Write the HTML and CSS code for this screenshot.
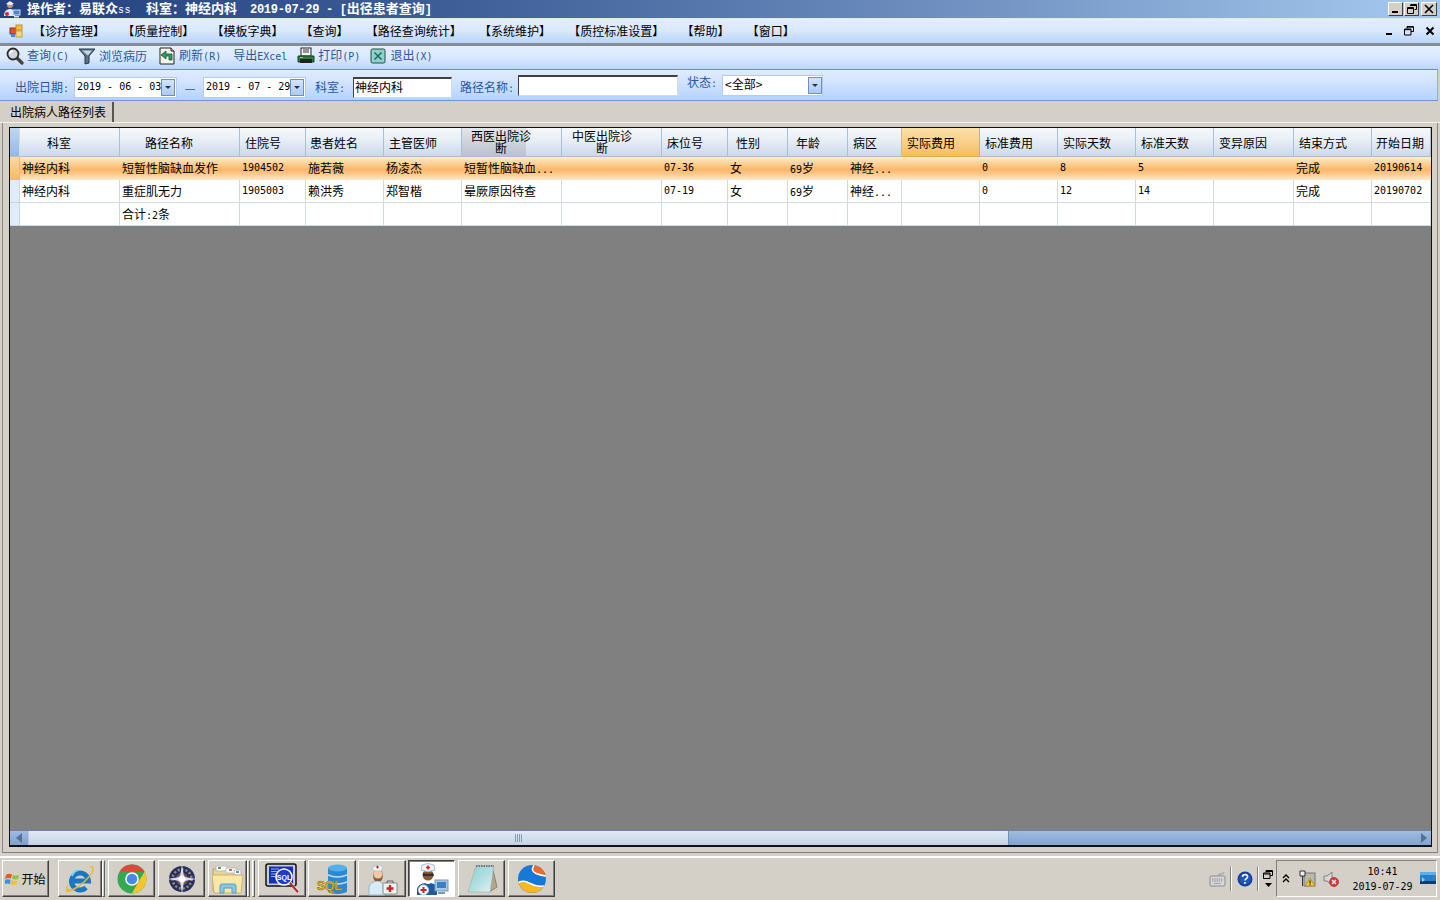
FILE: index.html
```html
<!DOCTYPE html>
<html lang="zh-CN">
<head>
<meta charset="utf-8">
<title>出径患者查询</title>
<link rel="stylesheet" href="styles.css">
</head>
<body>
<div class="app">
  <header class="titlebar">
    <svg class="title-icon" width="18" height="18" viewBox="0 0 18 18"><circle cx="7" cy="5" r="3" fill="#c99a72"/><path d="M3 4l4-3 4 3-4 1z" fill="#eef"/><path d="M1 16c0-5 3-7 6-7s5 2 5 7z" fill="#dfe8f4"/><circle cx="4" cy="14" r="2" fill="#d22"/><rect x="10" y="10" width="7" height="5" fill="#4a86c8" stroke="#dde" stroke-width="1"/><rect x="11" y="16" width="5" height="1.5" fill="#dde"/></svg>
    <span class="title-text">操作者：易联众<span class="t-lat t-small">ss</span><span class="t-gap1"></span>科室：神经内科<span class="t-gap2"></span><span class="t-lat">2019-07-29 - [</span>出径患者查询<span class="t-lat">]</span></span>
    <div class="winbtns">
      <button class="winbtn"><svg width="10" height="10" viewBox="0 0 10 10"><rect x="1" y="7" width="6" height="2" fill="#000"/></svg></button>
      <button class="winbtn"><svg width="10" height="10" viewBox="0 0 10 10"><path d="M3.5 .5h6v5h-2M.5 3.5h6v6h-6z M3 1.5h6.5M0 4.5h6.5" fill="none" stroke="#000"/></svg></button>
      <button class="winbtn winbtn-x"><svg width="10" height="10" viewBox="0 0 10 10"><path d="M1 1l8 8M9 1l-8 8" stroke="#000" stroke-width="1.6"/></svg></button>
    </div>
  </header>

  <nav class="menubar">
    <svg class="menu-icon" width="14" height="14" viewBox="0 0 14 14"><rect x="1" y="4" width="6" height="6" fill="#e05030" stroke="#a03010"/><rect x="7" y="1" width="6" height="5" fill="#f4c040" stroke="#c89020"/><rect x="7" y="7" width="6" height="6" fill="#f4d880" stroke="#c0a040"/><rect x="2" y="10" width="4" height="3" fill="#5080d0"/></svg>
    <ul class="menu-list">
      <li>【诊疗管理】</li><li>【质量控制】</li><li>【模板字典】</li><li>【查询】</li><li>【路径查询统计】</li><li>【系统维护】</li><li>【质控标准设置】</li><li>【帮助】</li><li>【窗口】</li>
    </ul>
    <div class="mdi-btns">
      <svg width="8" height="8" viewBox="0 0 8 8"><rect x="1" y="5" width="6" height="2" fill="#000"/></svg>
      <svg width="10" height="10" viewBox="0 0 10 10"><path d="M3 2.5V.5h6.500v5H7M.5 3h6.500v6H.5z M3 1.2h6.500M.5 3.700h6.500" fill="none" stroke="#000"/></svg>
      <svg width="10" height="10" viewBox="0 0 10 10"><path d="M1.5 1.5l7 7M8.500 1.500l-7 7" stroke="#000" stroke-width="2"/></svg>
    </div>
  </nav>

  <div class="toolbar">
    <div class="tool tool-1"><svg width="18" height="18" viewBox="0 0 18 18"><path d="M11 11l5 5" stroke="#4a3f36" stroke-width="3.200" stroke-linecap="round"/><circle cx="7" cy="7" r="5.500" fill="#cfd6dd" stroke="#2c2c2c" stroke-width="1.800"/><path d="M4 7a3 3 0 0 1 3-3" stroke="#fff" stroke-width="1.400" fill="none"/></svg><span>查询<span class="lat">(C)</span></span></div>
    <div class="tool tool-2"><svg width="18" height="18" viewBox="0 0 18 18"><path d="M1 2h16l-6 7v7l-4 1V9z" fill="#5d7488" stroke="#22364a"/><path d="M4 3.500h10l-4 5z" fill="#c6d6e4"/></svg><span>浏览病历</span></div>
    <div class="tool tool-3"><svg width="18" height="18" viewBox="0 0 18 18"><path d="M2 1h11l3 3v13H2z" fill="#f4f4e8" stroke="#222"/><path d="M13 1v3h3" fill="#ccc" stroke="#222"/><path d="M14 13V7H8V4L3 8l5 4V9h3v4z" fill="#2e9a64" stroke="#14553a" stroke-width=".8"/></svg><span>刷新<span class="lat">(R)</span></span></div>
    <div class="tool tool-4"><span>导出<span class="lat">EXcel</span></span></div>
    <div class="tool tool-5"><svg width="18" height="18" viewBox="0 0 18 18"><rect x="4" y="1" width="10" height="8" fill="#f4f4f4" stroke="#222"/><path d="M6 3h6M6 5h6" stroke="#333"/><path d="M1 9h16v6H1z" fill="#2e7d3a" stroke="#143" /><rect x="3" y="12" width="12" height="4" fill="#222"/><rect x="3" y="10" width="3" height="1" fill="#9c6"/></svg><span>打印<span class="lat">(P)</span></span></div>
    <div class="tool tool-6"><svg width="16" height="16" viewBox="0 0 16 16"><rect x="1" y="1" width="14" height="14" rx="1.500" fill="#8fd3c8" stroke="#204a50"/><path d="M4.500 4.500l7 7M11.500 4.500l-7 7" stroke="#1f6a70" stroke-width="1.600"/></svg><span>退出<span class="lat">(X)</span></span></div>
  </div>

  <form class="filters">
    <label class="f-label f-date-label">出院日期<span class="lat">:</span></label>
    <div class="datebox"><span class="lat">2019 - 06 - 03</span><span class="ddbtn"><i></i></span></div>
    <span class="dash">—</span>
    <div class="datebox"><span class="lat">2019 - 07 - 29</span><span class="ddbtn"><i></i></span></div>
    <label class="f-label f-dept-label">科室<span class="lat">:</span></label>
    <div class="input input-dept">神经内科</div>
    <label class="f-label f-path-label">路径名称<span class="lat">:</span></label>
    <div class="input input-path"></div>
    <label class="f-label f-state-label">状态<span class="lat">:</span></label>
    <div class="combo"><span>&lt;全部&gt;</span><span class="ddbtn"><i></i></span></div>
  </form>

  <div class="tabstrip"><div class="tab">出院病人路径列表</div></div>

  <main class="panel">
    <div class="grid">
      <div class="row head">
        <div class="corner"></div>
        <div class="hc">科室</div><div class="hc">路径名称</div><div class="hc">住院号</div><div class="hc">患者姓名</div><div class="hc">主管医师</div>
        <div class="hc wrap progress"><span>西医出院诊断</span></div><div class="hc wrap"><span>中医出院诊断</span></div>
        <div class="hc">床位号</div><div class="hc">性别</div><div class="hc">年龄</div><div class="hc">病区</div><div class="hc hot">实际费用</div>
        <div class="hc">标准费用</div><div class="hc">实际天数</div><div class="hc">标准天数</div><div class="hc">变异原因</div><div class="hc">结束方式</div><div class="hc">开始日期</div>
      </div>
      <div class="row data selected">
        <div class="rh"></div>
        <div class="c">神经内科</div><div class="c">短暂性脑缺血发作</div><div class="c lat">1904502</div><div class="c">施若薇</div><div class="c">杨凌杰</div><div class="c">短暂性脑缺血<span class="lat dots">...</span></div><div class="c"></div><div class="c lat">07-36</div><div class="c">女</div><div class="c"><span class="lat">69</span>岁</div><div class="c">神经<span class="lat dots">...</span></div><div class="c"></div><div class="c lat">0</div><div class="c lat">8</div><div class="c lat">5</div><div class="c"></div><div class="c">完成</div><div class="c lat">20190614</div>
      </div>
      <div class="row data">
        <div class="rh"></div>
        <div class="c">神经内科</div><div class="c">重症肌无力</div><div class="c lat">1905003</div><div class="c">赖洪秀</div><div class="c">郑智楷</div><div class="c">晕厥原因待查</div><div class="c"></div><div class="c lat">07-19</div><div class="c">女</div><div class="c"><span class="lat">69</span>岁</div><div class="c">神经<span class="lat dots">...</span></div><div class="c"></div><div class="c lat">0</div><div class="c lat">12</div><div class="c lat">14</div><div class="c"></div><div class="c">完成</div><div class="c lat">20190702</div>
      </div>
      <div class="row data">
        <div class="rh"></div>
        <div class="c"></div><div class="c">合计<span class="lat">:2</span>条</div><div class="c"></div><div class="c"></div><div class="c"></div><div class="c"></div><div class="c"></div><div class="c"></div><div class="c"></div><div class="c"></div><div class="c"></div><div class="c"></div><div class="c"></div><div class="c"></div><div class="c"></div><div class="c"></div><div class="c"></div><div class="c"></div>
      </div>
      <div class="grid-empty"></div>
      <div class="hscroll">
        <span class="sb-btn"><svg width="6" height="10" viewBox="0 0 6 10"><path d="M6 0v10L0 5z" fill="#56708f"/></svg></span>
        <span class="sb-thumb"><i></i></span>
        <span class="sb-track"></span>
        <span class="sb-end"><svg width="6" height="10" viewBox="0 0 6 10"><path d="M0 0v10l6-5z" fill="#56708f"/></svg></span>
      </div>
    </div>
  </main>

  <footer class="taskbar">
    <button class="tb tb-start"><svg width="16" height="14" viewBox="0 0 16 14"><path d="M1 3q3-2 6-.5L6 6.500q-3-1-6 .5z" fill="#e8562a"/><path d="M8 3q3 1.500 6 0l-1 4q-3 1-6-.5z" fill="#8cc43c"/><path d="M0 8q3-1.500 5.500 0L5 12q-3-1-6 .5z" fill="#3a90dc"/><path d="M6.500 8q3 1.500 6 .5l-1 4q-3 1-6-.5z" fill="#f4c030"/></svg><span>开始</span></button>

    <button class="tb tb-ie"><svg width="32" height="32" viewBox="0 0 32 32"><path d="M7.500 18h17a8.500 8.500 0 1 0-2.500 6.500" stroke="#1878c4" stroke-width="5" fill="none"/><path d="M8 13a9 9 0 0 1 6-6" stroke="#7fd4f6" stroke-width="2" fill="none"/><path d="M24 4C29 2 31 4 29 9 25 17 13 27 5 29 1 30 1 26 4 20 3 26 4 27 8 26 16 23 26 13 28 8 29 5 27 4 24 4z" fill="#e8b838"/></svg></button>
    <i class="grip"></i>
    <button class="tb tb-chrome"><svg width="30" height="30" viewBox="0 0 30 30"><circle cx="15" cy="15" r="14.500" fill="#34a853"/><path d="M15 .5a14.500 14.500 0 0 1 12.550 7.250L15 8.500 3.100 6.700A14.500 14.500 0 0 1 15 .5z" fill="#d94a3a"/><path d="M27.550 7.750A14.500 14.500 0 0 1 15 29.500l6-11z" fill="#f6c52c"/><circle cx="15" cy="15" r="6.800" fill="#fff"/><circle cx="15" cy="15" r="5.300" fill="#4a86e8"/></svg></button>
    <button class="tb tb-compass"><svg width="32" height="32" viewBox="0 0 32 32"><circle cx="16" cy="16" r="13" fill="#26305e"/><circle cx="16" cy="16" r="9.500" fill="none" stroke="#a08878" stroke-width="2.500" stroke-dasharray="2 2"/><circle cx="16" cy="16" r="6" fill="#7a5a60"/><path d="M16 1l2 13 13 2-13 2-2 13-2-13-13-2 13-2z" fill="#d8dce8"/><circle cx="16" cy="16" r="3.500" fill="#fff"/></svg></button>
    <button class="tb tb-folder"><svg width="32" height="30" viewBox="0 0 32 30"><path d="M1 5h10l2 2h16v20H1z" fill="#e8d590" stroke="#b8a060"/><rect x="4" y="2" width="11" height="5" fill="#fff" stroke="#bbb"/><rect x="6" y="3" width="3" height="2" fill="#5aa050"/><rect x="14" y="4" width="11" height="5" fill="#fff" stroke="#bbb"/><rect x="17" y="5" width="3" height="2" fill="#d06a40"/><rect x="22" y="6" width="7" height="5" fill="#fff" stroke="#bbb"/><rect x="24" y="7" width="3" height="2" fill="#50a0a0"/><path d="M0 11h31l-2 18H2z" fill="#f8e8a8" stroke="#c8b070"/><path d="M8 29v-7q0-2 2-2h12q2 0 2 2v7h-4v-5h-8v5z" fill="#8cc4e4" stroke="#5a9cc4"/></svg></button>
    <i class="grip"></i><i class="grip grip-2"></i>
    <button class="tb tb-sqlmon"><svg width="34" height="34" viewBox="0 0 34 34"><rect x="1" y="2" width="30" height="22" rx="2" fill="#c8ccd0" stroke="#111" stroke-width="1.500"/><rect x="4" y="4.500" width="24" height="17" fill="#1430b8"/><path d="M6 7h8M6 9.500h6M6 12h5M6 14.500h5" stroke="#8cb0f0"/><circle cx="19" cy="15" r="8" fill="#1a3cc8" stroke="#fff" stroke-width="1.500"/><text x="19" y="18" class="svgtxt-w" text-anchor="middle">SQL</text><path d="M25 21l8 9" stroke="#c02030" stroke-width="2.200"/><path d="M26 20l8 9" stroke="#eee" stroke-width=".8"/></svg></button>
    <button class="tb tb-sqldb"><svg width="34" height="32" viewBox="0 0 34 32"><rect x="13" y="5" width="19" height="23" fill="#2e88d0"/><ellipse cx="22.500" cy="28" rx="9.500" ry="3" fill="#2e88d0"/><ellipse cx="22.500" cy="5" rx="9.500" ry="3.500" fill="#52b0ec"/><path d="M13 12q9.500 4 19 0M13 19q9.500 4 19 0" stroke="#bfe0f8" fill="none" stroke-width="1.500"/><text x="2" y="27" class="svgtxt-sql">SQL</text></svg></button>
    <button class="tb tb-nurse"><svg width="34" height="34" viewBox="0 0 34 34"><path d="M4 33V25q1-5 8-6 7 1 8 6v8z" fill="#d8ecf6" stroke="#98b8d0"/><path d="M9 9q-2 7 1 10h6q3-4 1-10z" fill="#8a5a30"/><circle cx="13" cy="12" r="4.500" fill="#f4c8a4"/><path d="M7 6l6-4 5 3-2 4H9z" fill="#eef4f8" stroke="#b8c8d0"/><path d="M11 5h3M12.500 3.500v3" stroke="#d02020" stroke-width="1.200"/><rect x="18" y="21" width="14" height="11" rx="1" fill="#f4f4f4" stroke="#888"/><path d="M22 21v-2h6v2" fill="none" stroke="#666"/><path d="M25 23v7M21.500 26.500h7" stroke="#d02020" stroke-width="2.400"/></svg></button>
    <button class="tb tb-doctor active"><svg width="34" height="34" viewBox="0 0 34 34"><path d="M2 33v-6q1-5 8-6 3 2 6 0 4 1 6 3v9z" fill="#1d5aa0"/><circle cx="8.500" cy="28" r="5" fill="#fff" stroke="#c8d4e0"/><path d="M8.500 25v6M5.500 28h6" stroke="#d02020" stroke-width="2"/><circle cx="13" cy="13" r="5.500" fill="#8a5a38"/><path d="M8 11q5 2 10 0l1 3H8z" fill="#303030"/><path d="M6 8l1-5q6-3 12 0l1 5q-7 3-14 0z" fill="#eef6fa" stroke="#a8c0d0"/><path d="M13 3.500v4M11 5.500h4" stroke="#d02020" stroke-width="1.600"/><rect x="20" y="18" width="13" height="11" fill="#a8c8e0" stroke="#7898b4"/><rect x="22" y="20" width="9" height="6" fill="#3a80c8"/><path d="M23 31h7" stroke="#7898b4" stroke-width="2"/></svg></button>
    <button class="tb tb-note"><svg width="32" height="32" viewBox="0 0 32 32"><defs><linearGradient id="notepage" x1="0" y1="0" x2="1" y2="1"><stop offset="0" stop-color="#8ccfd2"/><stop offset=".55" stop-color="#b4e0e2"/><stop offset="1" stop-color="#e6f4f4"/></linearGradient></defs><path d="M26 3l5 21-8 5z" fill="#b3a98a" stroke="#8a8268"/><path d="M10 3h18l-4 26H2z" fill="url(#notepage)" stroke="#8fb0b4" stroke-width=".6"/><path d="M10 3h18" stroke="#777" stroke-width="2" stroke-dasharray="1.500 1"/></svg></button>
    <button class="tb tb-sogou"><svg width="30" height="30" viewBox="0 0 30 30"><circle cx="15" cy="15" r="14" fill="#1878d8"/><path d="M17 1.200Q13 7 19 9.500q5 2 10 2.500A14 14 0 0 0 17 1.200z" fill="#ee6a2a"/><path d="M1.500 18.500Q7 16 12 19q7 4 15 3A14 14 0 0 1 1.500 18.500z" fill="#f6ba1e"/><path d="M1.500 18.500Q7 16 12 19q7 4 15 3" stroke="#fff" stroke-width="1.500" fill="none"/><path d="M17 1.200Q13 7 19 9.500q5 2 10 2.500" stroke="#fff" stroke-width="1.500" fill="none"/></svg></button>

    <div class="quick">
      <svg width="17" height="16" viewBox="0 0 17 16"><path d="M9 5q0-2 3-2t3-2" stroke="#999" fill="none"/><rect x="1" y="5" width="15" height="10" rx="1" fill="#d8d8d8" stroke="#8c8c8c"/><path d="M3 8h11M3 10h11M5 12.500h7" stroke="#8c8c8c" stroke-dasharray="1.500 .7"/></svg>
      <i class="q-sep"></i>
      <svg class="q-help" width="16" height="16" viewBox="0 0 16 16"><circle cx="8" cy="8" r="7.500" fill="#163c9c"/><circle cx="8" cy="8" r="5.800" fill="#1f55c0"/><path d="M5.500 6q0-2.500 2.700-2.500 2.700.2 2.300 2.500-.2 1-1.500 1.800-1 .5-1 1.700" stroke="#fff" stroke-width="1.500" fill="none"/><rect x="7" y="11" width="1.800" height="1.800" fill="#fff"/></svg>
      <i class="q-sep"></i>
      <div class="q-stack"><svg width="10" height="9" viewBox="0 0 10 9"><path d="M3 2.500V.5h6.500v5H7M.5 3h6.500v5.500H.5zM3 1.500h6.500M.5 4h6.500" fill="none" stroke="#000"/></svg><svg width="7" height="4" viewBox="0 0 7 4"><path d="M0 0h7L3.500 4z" fill="#000"/></svg></div>
    </div>
    <div class="tray">
      <svg width="8" height="9" viewBox="0 0 8 9"><path d="M1 4l3-3 3 3M1 8l3-3 3 3" stroke="#000" stroke-width="1.300" fill="none"/></svg>
      <svg class="t-net" width="17" height="17" viewBox="0 0 17 17"><rect x="5" y="3" width="11" height="13" fill="#b8b8b0" stroke="#777"/><path d="M1 1h5v5H1z" fill="#eee" stroke="#333"/><path d="M3.500 6v10" stroke="#333"/><path d="M11 8l5 8H6z" fill="#f4cc20" stroke="#9a7a10" stroke-width=".6"/><path d="M11 10.500v3M11 14.300v1" stroke="#000"/></svg>
      <svg class="t-vol" width="16" height="17" viewBox="0 0 16 17"><path d="M1 6h3l5-4v13L4 11H1z" fill="#d8d8d8" stroke="#808080"/><circle cx="11" cy="12" r="4.500" fill="#d83a3a" stroke="#a01818" stroke-width=".6"/><path d="M9 10l4 4M13 10l-4 4" stroke="#fff" stroke-width="1.200"/></svg>
      <div class="clock"><span class="lat">10:41</span><span class="lat">2019-07-29</span></div>
      <svg class="t-desk" width="16" height="14" viewBox="0 0 16 14"><rect width="16" height="12" fill="#2a80c8"/><path d="M0 0h16v3H0z" fill="#5ab0e8"/><rect y="9" width="16" height="3" fill="#123a70"/><path d="M2 5l3 3-3 2z" fill="#9cd"/></svg>
    </div>
  </footer>
</div>
</body>
</html>
```
FILE: styles.css
```css
* { box-sizing: border-box; }
html, body { margin: 0; padding: 0; }
body {
  width: 1440px; height: 900px; overflow: hidden;
  font: 12px/14px "Noto Sans CJK SC", "Liberation Sans", sans-serif;
  color: #000; background: #d4d0c8;
}
button { font: inherit; color: inherit; padding: 0; margin: 0; }
.lat { font-family: "DejaVu Sans Mono", "Noto Sans CJK SC", monospace; font-size: 10px; }
.app { display: flex; flex-direction: column; width: 1440px; height: 900px; }

/* title */
.titlebar {
  flex: none; height: 18px; display: flex; align-items: center; padding-left: 3px;
  background: linear-gradient(90deg, #24407f 0%, #3f6099 33%, #6f90c0 66%, #a6caf0 100%);
  color: #fff;
}
.title-icon { flex: none; margin-right: 6px; }
.title-text { font-size: 13px; font-weight: 700; white-space: pre; line-height: 18px; }
.t-lat { font-family: "Liberation Mono", monospace; font-size: 12px; font-weight: 700; letter-spacing: -.3px; }
.t-small { font-size: 10px; font-weight: 400; letter-spacing: .5px; }
.t-gap1 { display: inline-block; width: 15px; }
.t-gap2 { display: inline-block; width: 13px; }
.winbtns { margin-left: auto; display: flex; gap: 1px; padding-right: 3px; }
.winbtn {
  width: 15px; height: 14px; display: flex; align-items: center; justify-content: center;
  background: #d4d0c8; border: 1px solid; border-color: #fff #404040 #404040 #fff;
}
.winbtn-x { width: 16px; margin-left: 1px; }

/* menu */
.menubar {
  flex: none; height: 25px; display: flex; align-items: center; padding-left: 9px;
  border-top: 1px solid #e6e6e6;
  background: linear-gradient(180deg, #e3eefe 0%, #dbe9fd 45%, #b9d5f9 100%);
}
.menu-icon { flex: none; margin-right: 10px; }
.menu-list { display: flex; gap: 17.200px; list-style: none; margin: 0; padding: 0; }
.mdi-btns { margin-left: auto; display: flex; align-items: center; gap: 11px; padding-right: 5px; }
.mdi-btns svg:first-child { margin-top: 2px; }

/* toolbar */
.toolbar {
  flex: none; height: 26px; display: flex; align-items: center; color: #27589e;
  border-top: 3px solid; border-image: linear-gradient(180deg, #8a9099, #4e5560, #7d8694) 1;
  border-right: 0; border-left: 0; border-bottom: 0;
  background: linear-gradient(180deg, #e3eefe 0%, #dbe9fd 50%, #bbd6fa 100%);
  padding: 0 0 3px 6px;
}
.tool { display: flex; align-items: center; gap: 3px; white-space: nowrap; }
.tool-2 { margin-left: 9px; }
.tool-3 { margin-left: 11px; }
.tool-4 { margin-left: 12px; }
.tool-5 { margin-left: 10px; }
.tool-6 { margin-left: 10px; gap: 4px; }

/* filters */
.filters {
  flex: none; height: 32px; margin: 0; display: flex; align-items: center; color: #27589e;
  border-top: 1px solid #6a8fc0; border-bottom: 1px solid #6f97c9; border-right: 1px solid #8fb0d8;
  margin-right: 2px;
  background: linear-gradient(180deg, #e0ecfe 0%, #cfe2fd 45%, #b5d3fe 100%);
  padding: 5px 0 0 15px;
}
.f-label { white-space: nowrap; }
.f-date-label { width: 59px; }
.datebox, .combo {
  height: 21px; display: flex; align-items: center; background: #fff; color: #000;
  border: 1px solid #b5cce8;
}
.datebox { width: 103px; padding-left: 2px; justify-content: space-between; padding-right: 1px; white-space: pre; }
.datebox .lat { margin-top: -2px; }
.ddbtn {
  width: 14px; height: 17px; display: flex; align-items: center; justify-content: center; flex: none;
  background: linear-gradient(180deg, #d4e4fa, #aecaf0); border: 1px solid #6f8fc0;
}
.ddbtn i { width: 0; height: 0; border: 3px solid transparent; border-top-color: #1b3560; border-bottom: 0; }
.dash { width: 26px; text-align: center; }
.f-dept-label { margin-left: 9px; width: 38px; }
.input { height: 21px; background: #fff; color: #000; line-height: 15px; padding-left: 1px;
  border: 1px solid; border-color: #404040 #d8d8d8 #d8d8d8 #404040; border-width: 2px 1px 1px 1px; }
.input-dept { width: 99px; }
.f-path-label { margin-left: 8px; width: 58px; }
.input-path { width: 160px; margin-top: -4px; }
.f-state-label { margin-left: 9px; width: 35px; margin-top: -9px; }
.combo { width: 101px; padding-left: 2px; justify-content: space-between; padding-right: 0; margin-top: -4px; }
.combo span:first-child { margin-top: -4px; }

/* tab */
.tabstrip { flex: none; height: 22px; padding: 1px 0 0 3px; background: #d4d0c8; border-bottom: 1px solid #f4f2ec; }
.tab { width: 111px; height: 20px; padding: 3px 0 0 7px; border-right: 2px solid #555; line-height: 14px; }

/* grid panel */
.panel {
  flex: none; height: 730px; padding: 4px 6px 5px 6px; background: #d4d0c8;
  border-left: 1px solid #8a8a80; border-right: 1px solid #8a8a80; border-bottom: 1px solid #808080;
  margin: 0 2px 3px;
}
.grid { height: 720px; display: flex; flex-direction: column; background: #808080; border: 1px solid #101010; width: 1423px; }
.row {
  flex: none; display: grid;
  grid-template-columns: 10px 100px 120px 66px 78px 78px 100px 100px 66px 60px 60px 54px 78px 78px 78px 78px 80px 78px 59px;
}
.head { height: 29px; }
.corner { background: linear-gradient(180deg, #c0d6f2, #94b8e4); border-right: 1px solid #cfdcec; border-bottom: 1px solid #aebfd4; }
.hc {
  display: flex; align-items: center; padding-left: 5px; white-space: nowrap; padding-top: 1px;
  background: linear-gradient(180deg, #f6f9fc 0%, #e4ecf5 50%, #ccd9e8 100%);
  border-right: 1px solid #a9bfd8; border-bottom: 1px solid #a9bcd2;
}
.hc:nth-child(2) { padding-left: 27px; }
.hc:nth-child(3) { padding-left: 25px; }
.hc:nth-child(10), .hc:nth-child(11) { padding-left: 8px; }
.hc:nth-child(5), .hc:nth-child(19) { padding-left: 4px; }
.hc.wrap { padding: 0 0 1px 10px; white-space: normal; }
.hc.wrap.progress { padding-left: 9px; }
.hc.wrap span { display: block; width: 60px; line-height: 12px; text-align: center; }
.hc.progress { background-image: linear-gradient(180deg, #e2e6ec, #bbc2cc), linear-gradient(180deg, #f6f9fc 0%, #e4ecf5 50%, #ccd9e8 100%); background-size: 64px 100%, 100% 100%; background-repeat: no-repeat; }
.hc.hot { background: linear-gradient(180deg, #fde0a8 0%, #fad08a 50%, #f6bd60 100%); border-color: #e8a850; }
.data { height: 23px; background: #fff; }
.rh { background: #e1ecfa; border-right: 1px solid #c9d6e6; border-bottom: 1px solid #cdd6e0; }
.c {
  padding-left: 2px; line-height: 21px; white-space: nowrap; overflow: hidden;
  border-right: 1px solid #d3d9e2; border-bottom: 1px solid #d3d9e2;
}
.selected { background: linear-gradient(180deg, #feecd0 0%, #fcd49c 25%, #fab86a 55%, #fcc788 72%, #fdeacb 100%); }
.selected .rh { background: linear-gradient(180deg, #fdd8a0, #f8b868); border-color: #e8b878; }
.selected .c { border-color: #fde4bc; border-right-color: transparent; }
.grid-empty { flex: 1; }
.hscroll { flex: none; height: 16px; display: flex; background: #8fb0d8; border-top: 1px solid #7080a8; border-bottom: 1px solid #101030; }
.sb-btn { width: 18px; display: flex; align-items: center; justify-content: center; background: linear-gradient(180deg, #9dbce4, #7fa0cc); }
.sb-thumb { width: 981px; display: flex; align-items: center; justify-content: center; background: linear-gradient(180deg, #e2ebf6, #c2d2e4); border-left: 1px solid #b5c6dc; border-right: 1px solid #6f8fbc; }
.sb-thumb i { width: 7px; height: 8px; background: repeating-linear-gradient(90deg, #8a9cb4 0 1px, transparent 1px 2px); }
.sb-track { flex: 1; background: linear-gradient(180deg, #a0bce0, #80a4d0); }
.sb-end { width: 14px; display: flex; align-items: center; justify-content: center; background: linear-gradient(180deg, #a0bce0, #80a4d0); }

/* taskbar */
.taskbar {
  flex: 1; display: flex; align-items: center; padding-left: 2px; padding-bottom: 1px;
  background: #d4d0c8; border-top: 2px solid #fff;
}
.tb {
  flex: none; width: 47px; height: 37px; display: flex; align-items: center; justify-content: center;
  background: #d4d0c8; border: 1px solid; border-color: #fff #404040 #404040 #fff;
  box-shadow: inset -1px -1px 0 #808080;
  margin-left: 3px;
}
.tb-start { margin-left: 0; gap: 0; }
.tb-ie { margin-left: 9px; width: 44px; }
.tb-folder { width: 39px; }
.tb-sqlmon { width: 48px; margin-left: 3px; }
.tb-sqldb, .tb-nurse { width: 48px; margin-left: 2px; }
.tb-doctor { margin-left: 2px; }
.tb-note { margin-left: 3px; }
.active { background: #fff; border-color: #404040 #fff #fff #404040; box-shadow: inset 1px 1px 0 #808080; }
.grip { flex: none; width: 3px; height: 37px; border: 1px solid; border-color: #fff #606060 #606060 #fff; }
.grip-2 { margin-left: 2px; }
.quick { margin-left: auto; display: flex; align-items: center; gap: 4px; margin-right: 2px; }
.q-help { margin-left: 2px; }
.q-sep { width: 1px; height: 24px; background: #808080; box-shadow: 1px 0 0 #fff; }
.q-stack { display: flex; flex-direction: column; align-items: center; gap: 4px; width: 12px; }
.tray {
  flex: none; width: 161px; height: 37px; margin-right: 3px; display: flex; align-items: center;
  border: 1px solid; border-color: #808080 #fff #fff #808080; padding-left: 5px;
}
.t-net { margin-left: 9px; }
.t-vol { margin-left: 7px; }
.clock { margin-left: 13px; display: flex; flex-direction: column; align-items: center; width: 61px; gap: 2px; line-height: 13px; }
.t-desk { margin-left: 7px; }
.svgtxt-w { font: 700 7px "Liberation Sans", sans-serif; fill: #fff; }
.svgtxt-sql { font: 700 12px "Liberation Sans", sans-serif; fill: #e8c040; stroke: #9a7810; stroke-width: .7px; }
```
